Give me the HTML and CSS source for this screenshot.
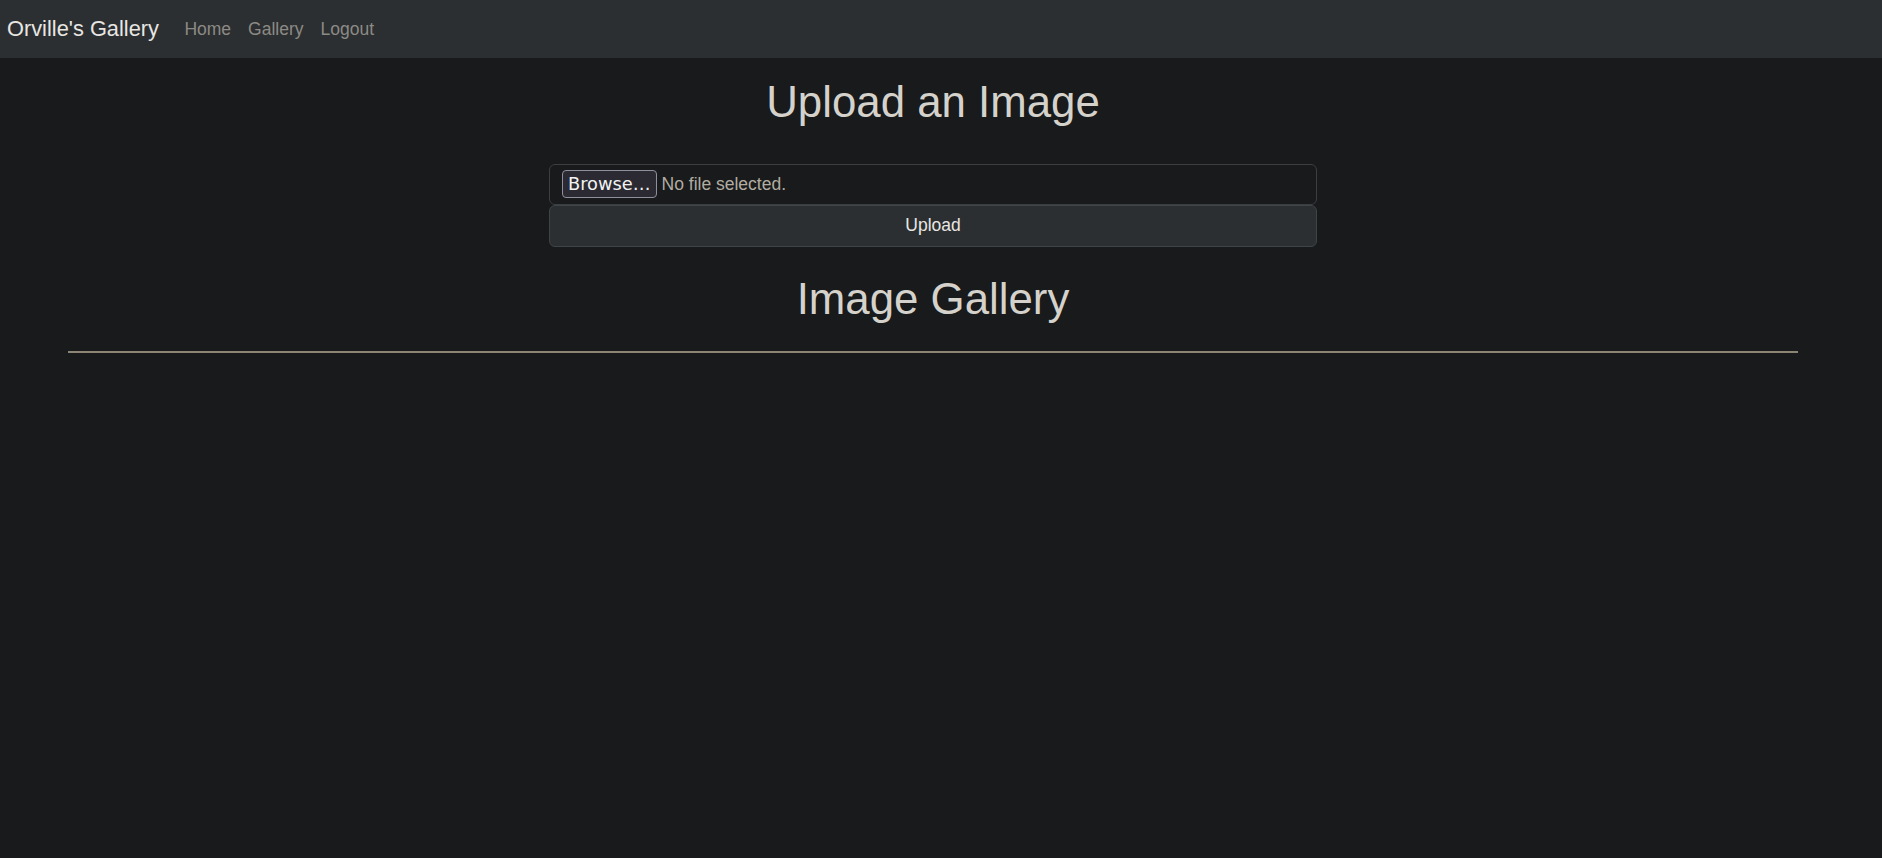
FILE: index.html
```html
<!DOCTYPE html>
<html lang="en">
<head>
<meta charset="utf-8">
<title>Orville's Gallery</title>
<link rel="stylesheet" href="styles.css">
</head>
<body>
<nav class="navbar">
  <a class="brand" href="#">Orville's Gallery</a>
  <ul class="nav-links">
    <li><a href="#">Home</a></li>
    <li><a href="#">Gallery</a></li>
    <li><a href="#">Logout</a></li>
  </ul>
</nav>
<main class="main">
  <h1 class="title">Upload an Image</h1>
  <form class="upload-form">
    <label class="file-field">
      <span class="browse-btn">Browse…</span>
      <span class="file-status">No file selected.</span>
    </label>
    <button type="button" class="upload-btn">Upload</button>
  </form>
  <h1 class="title gallery-title">Image Gallery</h1>
  <hr class="divider">
</main>
</body>
</html>
```
FILE: styles.css
```css
html, body {
  margin: 0;
  padding: 0;
}
body {
  background: #181a1b;
  color: #e8e6e3;
  font-family: "Liberation Sans", Arial, sans-serif;
  font-size: 17.5px;
  line-height: 1.5;
  min-height: 858px;
}
.navbar {
  display: flex;
  align-items: center;
  height: 58px;
  background: #2b2f31;
  padding: 0 0 0 7px;
}
.brand {
  font-size: 21.8px;
  color: #e8e6e3;
  text-decoration: none;
  margin-right: 17px;
  line-height: 32px;
}
.nav-links {
  display: flex;
  list-style: none;
  margin: 0;
  padding: 0;
}
.nav-links a {
  display: block;
  padding: 8px 8.5px;
  color: #8d8a85;
  text-decoration: none;
  font-size: 17.5px;
  line-height: 26px;
}
.main {
  display: flex;
  flex-direction: column;
  align-items: center;
  padding: 18px 16px 0 0;
}
.title {
  margin: 0;
  font-size: 43.8px;
  font-weight: 400;
  line-height: 1.2;
  color: #d5d2cc;
  text-align: center;
}
.upload-form {
  width: 768px;
  margin-top: 35px;
  display: flex;
  flex-direction: column;
}
.file-field {
  display: flex;
  align-items: center;
  height: 41px;
  box-sizing: border-box;
  border: 1px solid #3b3f42;
  border-radius: 6px;
  background: #181a1b;
  padding: 0 12px;
}
.browse-btn {
  font-family: "DejaVu Sans", sans-serif;
  font-size: 17.8px;
  line-height: 26px;
  color: #f2f2f2;
  background: #2b2a33;
  border: 1px solid #8f8f9d;
  border-radius: 4px;
  padding: 0 5px;
  margin-right: 5px;
}
.file-status {
  color: #b2aca2;
  font-size: 17.5px;
}
.upload-btn {
  height: 42px;
  box-sizing: border-box;
  border: 1px solid #3f4447;
  border-radius: 6px;
  background: #2b2f31;
  color: #e8e6e3;
  font-family: "Liberation Sans", Arial, sans-serif;
  font-size: 17.5px;
  cursor: pointer;
}
.gallery-title {
  margin-top: 26px;
}
.divider {
  align-self: stretch;
  margin: 26px 68px 0 68px;
  border: 0;
  height: 2px;
  background: #8c8475;
}
```
